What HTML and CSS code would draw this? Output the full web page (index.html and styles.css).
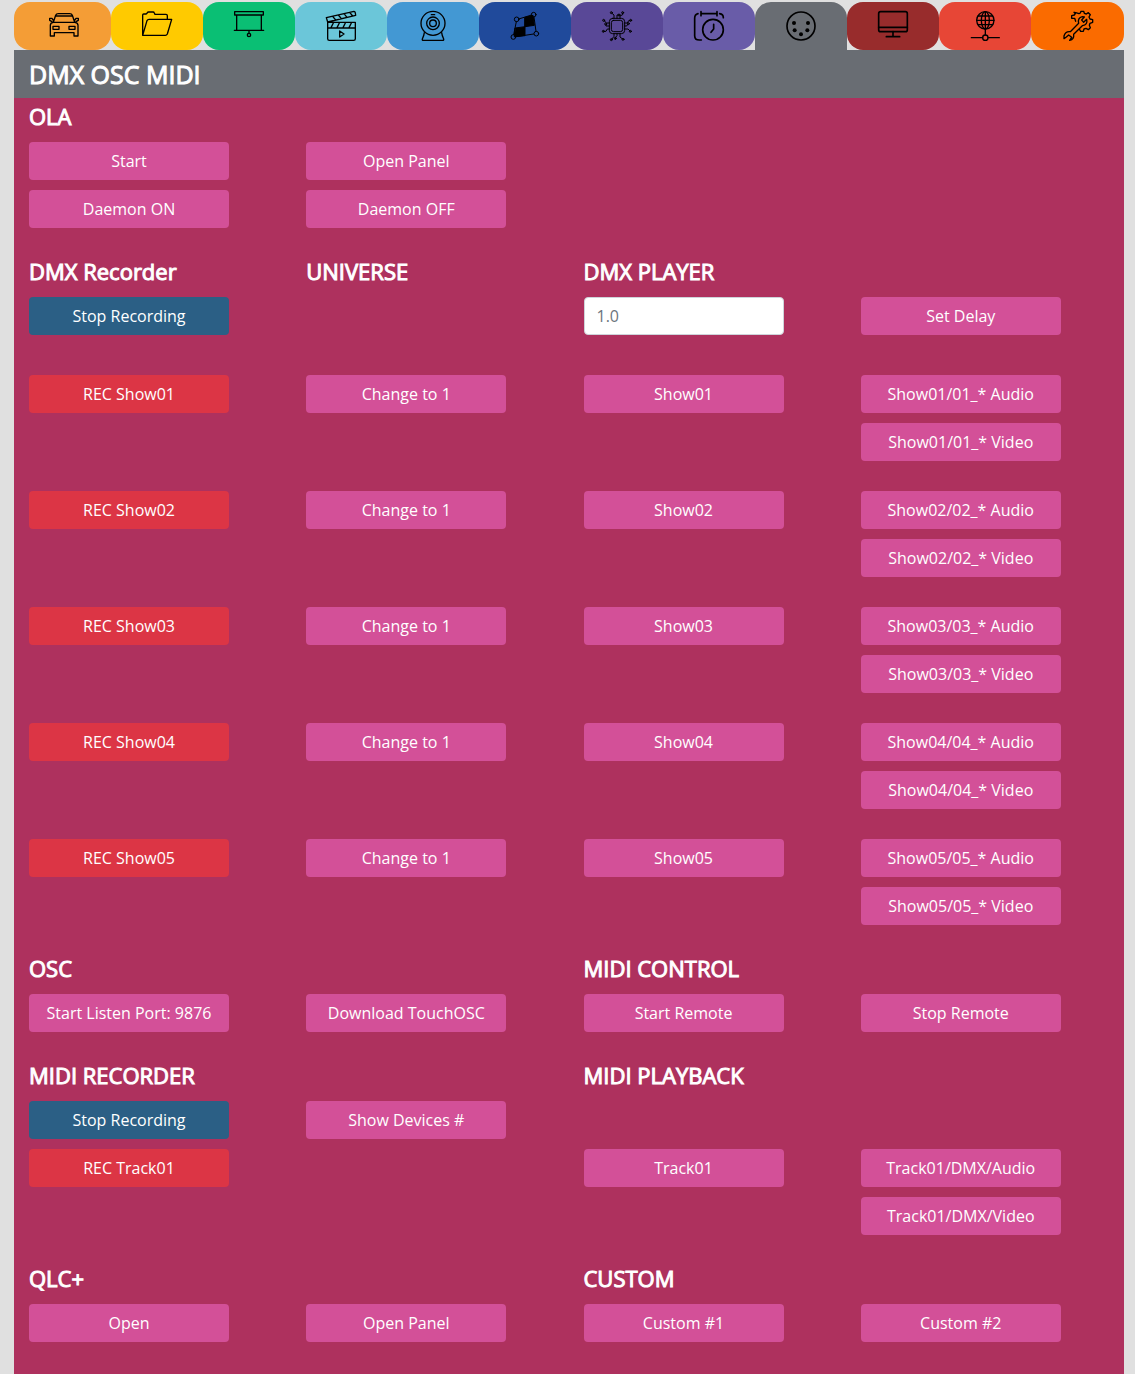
FILE: index.html
```html
<!DOCTYPE html>
<html lang="en">
<head>
<meta charset="utf-8">
<meta name="viewport" content="width=device-width, initial-scale=1">
<title>DMX OSC MIDI</title>
<link rel="stylesheet" href="styles.css">
</head>
<body>
<nav class="tabs" aria-label="Sections">
  <a class="tab tab-car" href="#car" aria-label="Autostart"><svg class="icon" viewBox="0 0 90 90"><path d="M13 34 20 13Q22 8 28 8H62Q68 8 70 13L77 34M20 15H70M13 34H77Q87 35 87 43V75H75V65H16V75H4V43Q4 35 13 34ZM13 28 9 22H2V28L9 32M77 28 81 22H88V28L81 32M12 46H30V55H12ZM60 46H78V55H60Z"/></svg></a>
  <a class="tab tab-folder" href="#files" aria-label="Files"><svg class="icon" viewBox="0 0 90 90"><path d="M2 72V12Q2 9 5 9H12Q15 8 16 5Q17 3 20 3H33Q36 3 37 6L39 10H72Q76 10 76 14V24M2 73 15 29Q17 25 21 25H89L76 69Q74 73 70 73H2"/></svg></a>
  <a class="tab tab-screen" href="#projector" aria-label="Projector"><svg class="icon" viewBox="0 0 90 90"><path d="M2 2H88V12H2ZM8 12V58M82 12V58M1 58H89M45 58V67"/><circle cx="45" cy="72" r="5"/></svg></a>
  <a class="tab tab-media" href="#media" aria-label="Media player"><svg class="icon" viewBox="0 0 90 90"><path d="M5 34H88V83Q88 88 83 88H10Q5 88 5 83ZM5 51H88M5 33 1 20 84 1Q87 1 88 6L89 13 5 33M20 16 29 27M37 12 46 23M54 8 63 19M71 4 80 15M22 36 15 50M40 36 33 50M58 36 51 50M76 36 69 50M41 60V78L54 69Z"/></svg></a>
  <a class="tab tab-camera" href="#camera" aria-label="Camera"><svg class="icon" viewBox="0 0 90 90"><circle cx="45" cy="37" r="36"/><circle cx="45" cy="37" r="19"/><circle cx="45" cy="37" r="10"/><path d="M40 11H50M19 65Q18 74 13 84Q12 88 16 88H74Q78 88 77 84Q72 74 71 65"/></svg></a>
  <a class="tab tab-mapping" href="#mapping" aria-label="Mapping"><svg class="icon thin" viewBox="0 0 90 90"><path class="solid" d="M45 19 69 13 73 43 45 47ZM16 51 45 47V74L14 77Z"/><path d="M26 24 65 12M19 32 11 71M72 18 78 61M18 77 71 69"/><circle cx="20" cy="25" r="7"/><circle cx="71" cy="11" r="7"/><circle cx="10" cy="78" r="7"/><circle cx="79" cy="68" r="7"/></svg></a>
  <a class="tab tab-chip" href="#sensors" aria-label="Sensors"><svg class="icon thin" viewBox="0 0 90 90"><rect x="22" y="22" width="46" height="46" rx="10"/><rect x="28" y="28" width="34" height="34" rx="7"/><path d="M36 22V12L30 7M45 22V12H51M54 22V15L62 11V6M36 68V76L29 85M45 68V74L40 80V85M54 68V78L62 84M22 36H14L6 29M22 45H12V40M22 54H16L12 61H5M68 36H76L80 29H85M68 45H74L78 39M68 54H78L84 60"/><circle cx="28" cy="5" r="3"/><circle cx="51" cy="12" r="3"/><circle cx="62" cy="5" r="3"/><circle cx="28" cy="86" r="3"/><circle cx="40" cy="82" r="3"/><circle cx="63" cy="85" r="3"/><circle cx="5" cy="28" r="3"/><circle cx="11" cy="39" r="3"/><circle cx="4" cy="61" r="3"/><circle cx="86" cy="28" r="3"/><circle cx="79" cy="38" r="3"/><circle cx="85" cy="61" r="3"/></svg></a>
  <a class="tab tab-timer" href="#schedule" aria-label="Schedule"><svg class="icon bold" viewBox="0 0 90 90"><path d="M12 8Q2 10 2 22V74Q2 87 16 87H22M21 8H69M21 2V14M69 2V14M77 8Q88 10 88 20M59 40V54L51 64"/><circle cx="57" cy="56" r="31"/></svg></a>
  <a class="tab tab-midi" href="#midi" aria-label="DMX OSC MIDI" aria-current="page"><svg class="icon bold" viewBox="0 0 90 90"><circle cx="45" cy="45" r="42"/><g class="dots"><circle cx="24" cy="36" r="6"/><circle cx="66" cy="36" r="6"/><circle cx="26" cy="58" r="6"/><circle cx="64" cy="58" r="6"/><circle cx="45" cy="70" r="6"/></g></svg></a>
  <a class="tab tab-monitor" href="#display" aria-label="Display"><svg class="icon bold" viewBox="0 0 90 90"><rect x="2" y="2" width="86" height="60" rx="6"/><path d="M2 49H88M45 62V77M25 77H65"/></svg></a>
  <a class="tab tab-network" href="#network" aria-label="Network"><svg class="icon" viewBox="0 0 90 90"><circle cx="46" cy="28" r="26"/><ellipse cx="46" cy="28" rx="12" ry="26"/><path d="M46 2V72M20 28H72M24 15H68M24 41H68M4 80H38M54 80H88"/><circle cx="46" cy="80" r="8"/></svg></a>
  <a class="tab tab-tools" href="#tools" aria-label="Tools"><svg class="icon" viewBox="0 0 90 90"><path d="M3 83V75Q7 60 22 62L47 37Q43 20 58 17L64 18 56 27 62 34 71 25Q75 41 58 44L32 70Q34 85 20 88L26 79 17 72 10 78ZM38 31 35 22H26V14L34 12 37 8 33 4 38 5 48 8 52 6 54 1H62L64 7 70 9 76 5 82 11 78 18 81 24 89 26V34L81 37 79 43 82 50 76 56 69 52 63 54 61 61H53L50 56"/></svg></a>
</nav>
<main class="panel">
  <h1 class="title">DMX OSC MIDI</h1>

  <section class="section">
    <div class="row heads"><h2>OLA</h2></div>
    <div class="row">
      <div class="stack"><button class="btn">Start</button><button class="btn">Daemon ON</button></div>
      <div class="stack"><button class="btn">Open Panel</button><button class="btn">Daemon OFF</button></div>
    </div>
  </section>

  <section class="section">
    <div class="row heads"><h2>DMX Recorder</h2><h2>UNIVERSE</h2><h2 id="player">DMX PLAYER</h2></div>
    <div class="row delay">
      <div class="stack"><button class="btn stop">Stop Recording</button></div>
      <div class="stack col-3"><input class="field" type="text" placeholder="1.0" aria-labelledby="player"></div>
      <div class="stack"><button class="btn">Set Delay</button></div>
    </div>
    <div class="row show">
      <div class="stack"><button class="btn rec">REC Show01</button></div>
      <div class="stack"><button class="btn">Change to 1</button></div>
      <div class="stack"><button class="btn">Show01</button></div>
      <div class="stack"><button class="btn">Show01/01_* Audio</button><button class="btn">Show01/01_* Video</button></div>
    </div>
    <div class="row show">
      <div class="stack"><button class="btn rec">REC Show02</button></div>
      <div class="stack"><button class="btn">Change to 1</button></div>
      <div class="stack"><button class="btn">Show02</button></div>
      <div class="stack"><button class="btn">Show02/02_* Audio</button><button class="btn">Show02/02_* Video</button></div>
    </div>
    <div class="row show">
      <div class="stack"><button class="btn rec">REC Show03</button></div>
      <div class="stack"><button class="btn">Change to 1</button></div>
      <div class="stack"><button class="btn">Show03</button></div>
      <div class="stack"><button class="btn">Show03/03_* Audio</button><button class="btn">Show03/03_* Video</button></div>
    </div>
    <div class="row show">
      <div class="stack"><button class="btn rec">REC Show04</button></div>
      <div class="stack"><button class="btn">Change to 1</button></div>
      <div class="stack"><button class="btn">Show04</button></div>
      <div class="stack"><button class="btn">Show04/04_* Audio</button><button class="btn">Show04/04_* Video</button></div>
    </div>
    <div class="row show">
      <div class="stack"><button class="btn rec">REC Show05</button></div>
      <div class="stack"><button class="btn">Change to 1</button></div>
      <div class="stack"><button class="btn">Show05</button></div>
      <div class="stack"><button class="btn">Show05/05_* Audio</button><button class="btn">Show05/05_* Video</button></div>
    </div>
  </section>

  <section class="section">
    <div class="row heads"><h2>OSC</h2><h2 class="col-3">MIDI CONTROL</h2></div>
    <div class="row">
      <div class="stack"><button class="btn">Start Listen Port: 9876</button></div>
      <div class="stack"><button class="btn">Download TouchOSC</button></div>
      <div class="stack"><button class="btn">Start Remote</button></div>
      <div class="stack"><button class="btn">Stop Remote</button></div>
    </div>
  </section>

  <section class="section">
    <div class="row heads"><h2>MIDI RECORDER</h2><h2 class="col-3">MIDI PLAYBACK</h2></div>
    <div class="row tracks">
      <div class="stack"><button class="btn stop">Stop Recording</button></div>
      <div class="stack"><button class="btn">Show Devices #</button></div>
    </div>
    <div class="row">
      <div class="stack"><button class="btn rec">REC Track01</button></div>
      <div class="stack col-3"><button class="btn">Track01</button></div>
      <div class="stack"><button class="btn">Track01/DMX/Audio</button><button class="btn">Track01/DMX/Video</button></div>
    </div>
  </section>

  <section class="section">
    <div class="row heads"><h2>QLC+</h2><h2 class="col-3">CUSTOM</h2></div>
    <div class="row">
      <div class="stack"><button class="btn">Open</button></div>
      <div class="stack"><button class="btn">Open Panel</button></div>
      <div class="stack"><button class="btn">Custom #1</button></div>
      <div class="stack"><button class="btn">Custom #2</button></div>
    </div>
  </section>
</main>
</body>
</html>
```
FILE: styles.css
```css
* {
  box-sizing: border-box;
}

body {
  display: flex;
  flex-direction: column;
  min-height: 100vh;
  margin: 0;
  padding: 2px 11px 0 14px;
  background: #e0e0e0;
  color: #fff;
  font: 16px/24px "Open Sans", "Noto Sans", sans-serif;
}

/* Tab bar */
.tabs {
  display: grid;
  grid-template-columns: 97fr repeat(10, 92fr) 93fr;
}

.tab {
  display: flex;
  align-items: center;
  justify-content: flex-end;
  height: 48px;
  padding-right: 31px;
  border-radius: 16px;
}

.tab-car { background: #f49d36; padding-right: 32px; }
.tab-folder { background: #ffca00; }
.tab-screen { background: #0abf74; }
.tab-media { background: #6bc6d9; }
.tab-camera { background: #4398d3; }
.tab-mapping { background: #204a9b; }
.tab-chip { background: #594897; }
.tab-timer { background: #695ca8; }
.tab-midi { background: #696d73; border-radius: 16px 16px 0 0; }
.tab-monitor { background: #982c2c; }
.tab-network { background: #e74636; }
.tab-tools { background: #fa6b00; }

.icon {
  width: 30px;
  height: 30px;
  overflow: visible;
  fill: none;
  stroke: #000;
  stroke-width: 4;
  stroke-linecap: round;
  stroke-linejoin: round;
}

.thin { stroke-width: 3; }
.bold { stroke-width: 5; }
.solid, .dots { fill: #000; }
.dots { stroke: none; }

/* Panel */
.panel {
  flex: 1;
  padding-bottom: 25px;
  background: #ae315e;
}

.title {
  margin: 0;
  padding: 0 15px;
  background: #696d73;
  font-size: 25px;
  font-weight: 400;
  line-height: 48px;
  -webkit-text-stroke: 1px #fff;
}

.section + .section {
  margin-top: 25px;
}

.row {
  display: grid;
  grid-template-columns: repeat(4, 1fr);
  padding-right: 1px;
}

.heads {
  padding-bottom: 8px;
}

h2 {
  margin: 0;
  padding: 0 15px;
  font-size: 22px;
  font-weight: 400;
  line-height: 36px;
  -webkit-text-stroke: 1px #fff;
}

.stack {
  display: flex;
  flex-direction: column;
  gap: 10px;
  padding: 0 15px;
}

.col-3 {
  grid-column: 3;
}

.delay {
  margin-bottom: 40px;
}

.show + .show {
  margin-top: 30px;
}

.tracks {
  margin-bottom: 10px;
}

.btn,
.field {
  width: 200px;
  max-width: 100%;
  height: 38px;
  padding: 6px 12px;
  border: 1px solid transparent;
  border-radius: 4px;
  font: inherit;
}

.btn {
  background: #d35098;
  color: #fff;
  white-space: nowrap;
  cursor: pointer;
}

.rec { background: #dc3545; }
.stop { background: #2b5f85; }

.field {
  border-color: #ced4da;
  background: #fff;
  color: #495057;
}

.field::placeholder {
  color: #6c757d;
  opacity: 1;
}
```
